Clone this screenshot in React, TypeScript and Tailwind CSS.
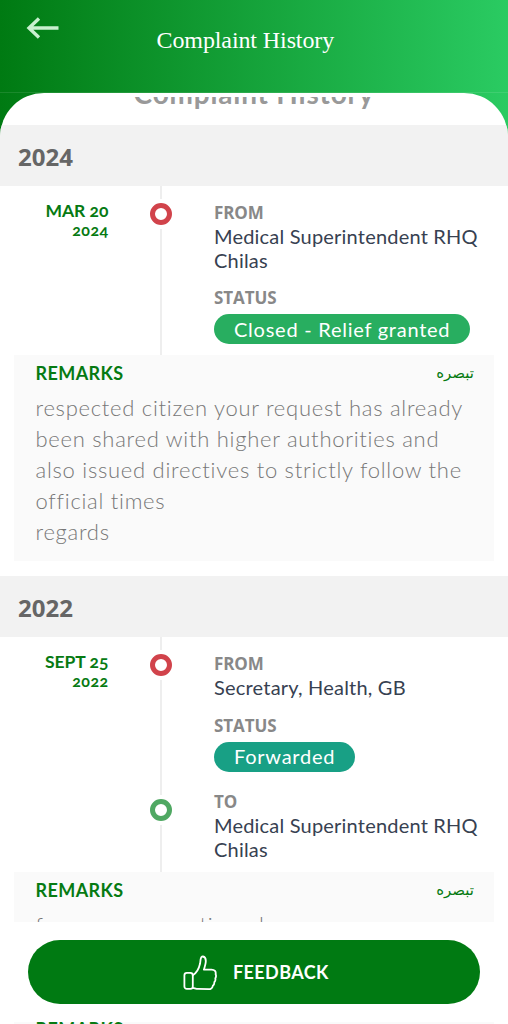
import React from 'react';

interface Step {
  label: 'FROM' | 'TO';
  office: string;
  date?: string;
  year?: string;
  status?: string;
}

interface HistoryEntry {
  year: string;
  steps: Step[];
  remarks: string[];
}

const entries: HistoryEntry[] = [
  {
    year: '2024',
    steps: [
      { label: 'FROM', office: 'Medical Superintendent RHQ Chilas', date: 'MAR 20', year: '2024', status: 'Closed - Relief granted' },
    ],
    remarks: [
      'respected citizen your request has already been shared with higher authorities and also issued directives to strictly follow the official times',
      'regards',
    ],
  },
  {
    year: '2022',
    steps: [
      { label: 'FROM', office: 'Secretary, Health, GB', date: 'SEPT 25', year: '2022', status: 'Forwarded' },
      { label: 'TO', office: 'Medical Superintendent RHQ Chilas' },
    ],
    remarks: ['for necessary action please'],
  },
];

const statusColors: Record<string, string> = {
  'Closed - Relief granted': 'bg-[#28ae60]',
  Forwarded: 'bg-[#18a085]',
};

const labelClass = 'h-6 font-["Open_Sans",sans-serif] text-[17px] font-bold leading-6 tracking-[-0.1px] text-[#888]';

const BackIcon = () => (
  <svg className="h-[22px] w-[34px]" viewBox="0 0 34 22" fill="none" stroke="#c9f0cf" strokeWidth="3.4">
    <path d="M2.5 11H32.5M13 1.5L3 11l10 9.5" />
  </svg>
);

const ThumbIcon = () => (
  <svg className="mt-0.5 h-9 w-[34px]" viewBox="0 0 34 36" fill="none" stroke="#fff" strokeWidth="1.8" strokeLinejoin="round" strokeLinecap="round">
    <rect x="1.4" y="17.8" width="8.4" height="16" rx="2.4" />
    <path d="M9.8 20.2C14.2 17.6 16.2 12.5 17.1 8.5L17.6 4.4C17.9 2.3 18.8 1.3 20 1.5C22.4 2 23.1 5.2 22.6 8.2C22.2 10.8 21.4 12.8 20.9 14.6H28.4C31.8 14.6 33.2 16.4 32.6 19.2C33.3 20.6 33.1 22 32.3 23.2C32.7 24.8 32.3 26.2 31.3 27.2C31.5 28.8 30.9 30 29.8 30.8C29.4 33 28 34.2 25.6 34.2L15.6 33.9C12.8 33.9 12 33.2 9.8 32.8" />
  </svg>
);

const RemarksHeading = () => (
  <div className="flex h-6 items-center justify-between font-bold text-[#067a12]">
    <span className="text-[18px] leading-6 tracking-[0.4px]">REMARKS</span>
    <span dir="rtl" className="font-['DejaVu_Sans',sans-serif] text-[15px] font-normal leading-6">تبصره</span>
  </div>
);

const TimelineStep: React.FC<{ step: Step }> = ({ step }) => (
  <div className="flex">
    <div className="w-[108.5px] text-right font-bold text-[#067a12]">
      {step.date && (
        <>
          <p className="-mt-px text-[17.5px] leading-[22px] [font-variant-numeric:oldstyle-nums]">{step.date}</p>
          <p className="-mt-px text-[16px] leading-[18px] tracking-[0.4px] [font-variant-numeric:oldstyle-nums]">{step.year}</p>
        </>
      )}
    </div>
    <div className="flex w-[105.5px] justify-center">
      <div className={`-ml-px flex h-[30px] w-[22px] items-center bg-white ${step.label === 'FROM' ? '-mt-0.5' : 'mt-[5px]'}`}>
        <div className={`size-[22px] rounded-full border-[5px] ${step.label === 'FROM' ? 'border-[#d1434b]' : 'border-[#4fa862]'}`} />
      </div>
    </div>
    <div className="flex-1">
      <p className={labelClass}>{step.label}</p>
      <p className="w-[270px] text-[20px] leading-[23.5px] tracking-[0.2px] text-[#374151]">{step.office}</p>
      {step.status && (
        <>
          <p className={`mt-3.5 ${labelClass}`}>STATUS</p>
          <span className={`mt-1 flex h-[30px] w-fit items-center rounded-full px-5 pb-px text-[20px] tracking-[0.75px] text-white ${statusColors[step.status]}`}>
            {step.status}
          </span>
        </>
      )}
    </div>
  </div>
);

const HistorySection: React.FC<{ entry: HistoryEntry }> = ({ entry }) => (
  <section className="pb-[15px]">
    <h2 className="flex h-[61.2px] items-center bg-[#f2f2f2] pl-[18px] pt-0.5 font-['Open_Sans',sans-serif] text-2xl font-bold text-[#666]">
      {entry.year}
    </h2>
    <div className="flex flex-col gap-[18.5px] bg-[linear-gradient(#eee,#eee)] bg-[length:2px_100%] bg-[position:160px_0] bg-no-repeat pb-[11px] pt-[15px]">
      {entry.steps.map((step) => (
        <TimelineStep key={step.label} step={step} />
      ))}
    </div>
    <div className="mx-3.5 bg-[#fafafa] pb-[14px] pl-[21.5px] pr-5 pt-1.5">
      <RemarksHeading />
      <div className="mt-[7px] text-[22px] font-light leading-[31px] tracking-[0.73px] text-[#777]">
        {entry.remarks.map((line) => (
          <p key={line}>{line}</p>
        ))}
      </div>
    </div>
  </section>
);

const App: React.FC = () => {
  return (
    <div className="flex h-[1024px] w-[508px] flex-col overflow-hidden bg-[linear-gradient(90deg,#007a12,#2acb62)] font-[Lato,sans-serif]">
      <header className="flex h-[93px] shrink-0 border-b border-white/10">
        <button className="ml-[25.5px] mt-[17px] h-[22px]" aria-label="Back">
          <BackIcon />
        </button>
        <h1 className="ml-[97px] mt-6 font-['Liberation_Serif',serif] text-2xl tracking-[-0.1px] text-white">Complaint History</h1>
      </header>

      <main className="flex min-h-0 flex-1 flex-col overflow-hidden rounded-t-[44px] bg-white pt-1">
        <div className="h-[825px] shrink-0 overflow-hidden">
          <div className="flex h-7 items-end justify-center overflow-hidden pb-2.5">
            <p className="text-[28px] font-bold leading-[44px] tracking-[0.8px] text-[#999]">Complaint History</p>
          </div>
          {entries.map((entry) => (
            <HistorySection key={entry.year} entry={entry} />
          ))}
        </div>

        <div className="flex h-[100px] shrink-0 flex-col bg-white px-7 pt-[18px]">
          <button className="flex h-16 items-center rounded-full bg-[#007a12] pl-[155px] text-[18px] font-bold tracking-[0.4px] text-white">
            <ThumbIcon />
            <span className="ml-4">FEEDBACK</span>
          </button>
        </div>

        <div className="mx-3.5 h-0.5 shrink-0 overflow-hidden bg-[#fafafa] pl-[21.5px] pr-5">
          <div className="-mt-[5px]">
            <RemarksHeading />
          </div>
        </div>
      </main>
    </div>
  );
};

export default App;
